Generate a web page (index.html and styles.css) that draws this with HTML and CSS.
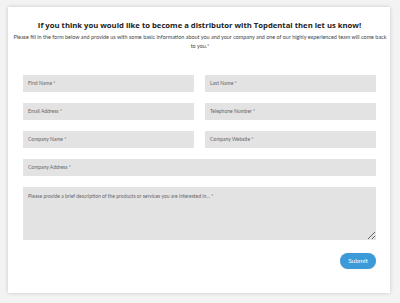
FILE: index.html
```html
<!DOCTYPE html>
<html>
<head>
<meta charset="utf-8">
<link rel="stylesheet" href="styles.css">
</head>
<body>
<div class="card">
  <h1 class="title">If you think you would like to become a distributor with Topdental then let us know!</h1>
  <p class="intro">Please fill in the form below and provide us with some basic information about you and your company and one of our highly experienced team will come back<br>to you.*</p>
  <form class="form">
    <div class="grid">
      <input class="field" type="text" placeholder="First Name *">
      <input class="field" type="text" placeholder="Last Name *">
      <input class="field" type="text" placeholder="Email Address *">
      <input class="field" type="text" placeholder="Telephone Number *">
      <input class="field" type="text" placeholder="Company Name *">
      <input class="field" type="text" placeholder="Company Website *">
      <input class="field wide" type="text" placeholder="Company Address *">
      <textarea class="field wide area" placeholder="Please provide a brief description of the products or services you are interested in... *"></textarea>
    </div>
    <div class="actions">
      <button class="submit" type="button">Submit</button>
    </div>
  </form>
</div>
</body>
</html>
```
FILE: styles.css
```css
html, body {
  margin: 0;
  padding: 0;
}
body {
  background: #f3f3f3;
  padding: 7px 10px 10px 8px;
  font-family: Lato, "Liberation Sans", sans-serif;
}
.card {
  background: #fff;
  width: 382px;
  height: 286px;
  box-sizing: border-box;
  padding: 12px 14px 0 15px;
  box-shadow: 0 0 4px rgba(0,0,0,0.18);
}
.title {
  margin: 0;
  font-family: "Open Sans", sans-serif;
  font-weight: 700;
  font-size: 7.7px;
  line-height: 12px;
  color: #222;
  text-align: center;
  white-space: nowrap;
}
.intro {
  margin: 1.5px -15px 0 -14px;
  font-size: 5.45px;
  line-height: 9px;
  color: #444;
  text-align: center;
  white-space: nowrap;
}
.form {
  margin-top: 24px;
}
.grid {
  display: grid;
  grid-template-columns: 1fr 1fr;
  column-gap: 11px;
  row-gap: 11px;
}
.field {
  display: block;
  box-sizing: border-box;
  width: 100%;
  height: 17px;
  margin: 0;
  border: none;
  background: #e3e3e3;
  padding: 0 5px;
  font-family: Lato, "Liberation Sans", sans-serif;
  font-size: 5px;
  color: #555;
  outline: none;
}
.field::placeholder {
  color: #666;
  opacity: 1;
}
.wide {
  grid-column: 1 / 3;
}
.area {
  height: 53px;
  padding: 6px 5px;
  resize: vertical;
}
.actions {
  display: flex;
  justify-content: flex-end;
  margin-top: 13px;
}
.submit {
  width: 36px;
  height: 16px;
  border: none;
  border-radius: 8px;
  background: #3d9ad8;
  color: #fff;
  font-family: Lato, "Liberation Sans", sans-serif;
  font-size: 6.4px;
  padding: 0;
  box-shadow: 0 0 1px rgba(0,0,0,0.2);
}
```
